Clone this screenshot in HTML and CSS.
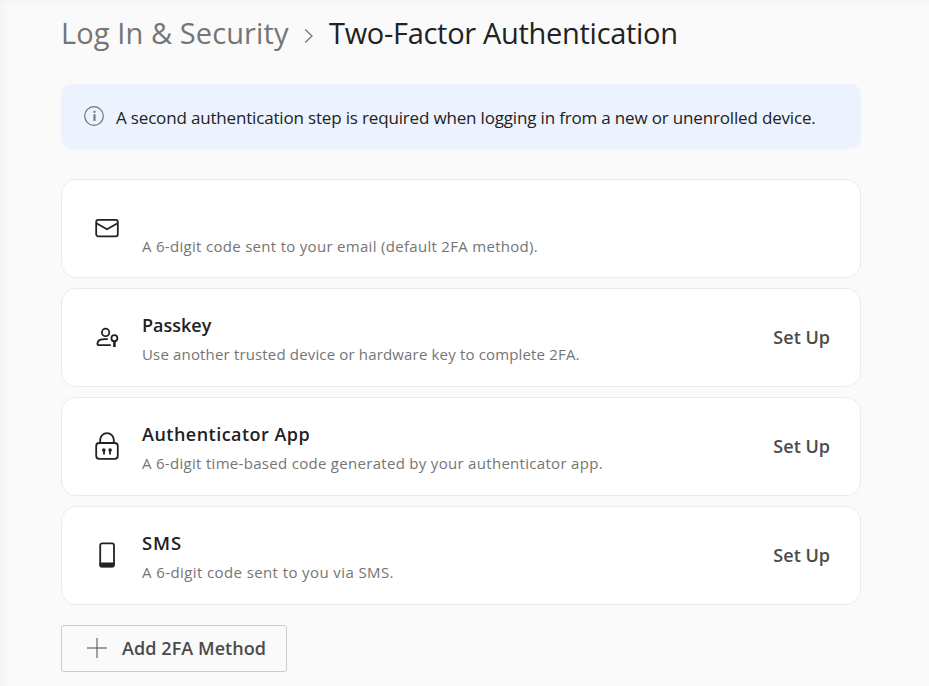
FILE: index.html
```html
<!DOCTYPE html>
<html lang="en">
  <head>
    <meta charset="UTF-8" />
    <meta name="viewport" content="width=device-width, initial-scale=1.0" />
    <title>Two-Factor Authentication</title>
    <link rel="stylesheet" href="styles.css">
  </head>
  <body>
    <main>
      <h1 class="Breadcrumb">
        <a class="Breadcrumb-parent">Log In &amp; Security</a>
        <svg class="Breadcrumb-chevron" width="10" height="16" viewBox="0 0 10 16">
          <path d="M1.200 1.500 8 8l-6.800 6.500" />
        </svg>
        <span class="Breadcrumb-current">Two-Factor Authentication</span>
      </h1>

      <div class="Notice">
        <svg class="Notice-icon" width="21" height="20" viewBox="0 0 21 20">
          <circle cx="11" cy="10" r="9.300" />
          <path d="M11.500 8.300v6.700M11.500 4.800v2" stroke-width="2" />
        </svg>
        <p>A second authentication step is required when logging in from a new or unenrolled device.</p>
      </div>

      <ul class="Methods">
        <li class="Method Method--email">
          <svg class="Method-icon" viewBox="0 0 32 32">
            <rect x="5.200" y="7.900" width="21.600" height="16.400" rx="2" />
            <path d="m5.400 11.200 10.600 6 10.600-6" />
          </svg>
          <div class="Method-text">
            <h2></h2>
            <p>A 6-digit code sent to your email (default 2FA method).</p>
          </div>
        </li>
        <li class="Method Method--passkey">
          <svg class="Method-icon" viewBox="0 0 32 32">
            <circle cx="14.600" cy="11.400" r="3.700" />
            <path d="M16.800 18.200c-5.500-.6-10.200.4-10.400 4.700 0 .9.600 1.300 1.400 1.300h12" />
            <circle cx="23.400" cy="17.200" r="3" />
            <path d="M23.400 20.200v5.800" stroke-width="2.600" />
          </svg>
          <div class="Method-text">
            <h2>Passkey</h2>
            <p>Use another trusted device or hardware key to complete 2FA.</p>
          </div>
          <a class="Method-action">Set Up</a>
        </li>
        <li class="Method Method--app">
          <svg class="Method-icon" viewBox="0 0 32 32">
            <path d="M9.200 13V9.900a6.800 6.800 0 0 1 13.600 0V13" />
            <rect x="5.200" y="13" width="21.600" height="15.800" rx="3" />
            <path d="M13 20v4.400M19 20v4.400" />
            <circle class="is-filled" cx="12.800" cy="20" r="1.800" />
            <circle class="is-filled" cx="19.100" cy="20" r="1.800" />
          </svg>
          <div class="Method-text">
            <h2>Authenticator App</h2>
            <p>A 6-digit time-based code generated by your authenticator app.</p>
          </div>
          <a class="Method-action">Set Up</a>
        </li>
        <li class="Method Method--sms">
          <svg class="Method-icon" viewBox="0 0 32 32">
            <rect x="9.200" y="4.400" width="13.800" height="23" rx="2" />
            <path class="is-filled" d="M8.500 23.500h15V26.500a2 2 0 0 1-2 2h-11a2 2 0 0 1-2-2z" />
          </svg>
          <div class="Method-text">
            <h2>SMS</h2>
            <p>A 6-digit code sent to you via SMS.</p>
          </div>
          <a class="Method-action">Set Up</a>
        </li>
      </ul>

      <button class="AddButton" type="button">
        <svg width="20" height="20" viewBox="0 0 20 20">
          <path d="M10 0v20M0 10h20" />
        </svg>
        <span>Add 2FA Method</span>
      </button>
    </main>
  </body>
</html>
```
FILE: styles.css
```css
:root {
  --color-text: #222;
  --color-muted: #757575;
  --color-action: #4b4b4b;
  --color-border: #ebebeb;
  --color-notice: #ecf3ff;
  --color-page: #fafafa;
}

* {
  box-sizing: border-box;
}

body {
  margin: 0;
  min-height: 686px;
  font-family: "Open Sans", "Noto Sans", sans-serif;
  color: var(--color-text);
  background-color: var(--color-page);
  box-shadow: inset 4px 3px 8px -2px rgba(0, 0, 0, 0.04);
}

main {
  width: 861px;
  padding: 12px 0 0 61px;
}

h1,
h2,
p,
ul {
  margin: 0;
  padding: 0;
}

svg {
  flex: none;
  fill: none;
  stroke: currentColor;
}

.Breadcrumb {
  display: flex;
  align-items: center;
  height: 40px;
  font-size: 29px;
  font-weight: 400;
  white-space: nowrap;
}

.Breadcrumb-parent {
  width: 243px;
  letter-spacing: 0.1px;
  color: var(--color-muted);
}

.Breadcrumb-chevron {
  margin: 8px 15px 0 0;
  stroke-width: 1.3;
  color: var(--color-muted);
}

.Breadcrumb-current {
  letter-spacing: -0.3px;
}

.Notice {
  display: flex;
  align-items: center;
  gap: 12px;
  height: 65px;
  margin: 32px 0 30px;
  padding: 0 22px;
  border-radius: 10px;
  font-size: 17px;
  letter-spacing: -0.17px;
  white-space: nowrap;
  background-color: var(--color-notice);
}

.Notice p {
  padding-top: 1px;
}

.Notice-icon {
  margin-bottom: 1px;
  stroke-width: 1.2;
  color: #6f7278;
}

.Methods {
  display: grid;
  gap: 10px;
  list-style: none;
}

.Method {
  display: flex;
  align-items: center;
  height: 99px;
  padding: 0 30px 0 29px;
  border: 1px solid var(--color-border);
  border-radius: 15px;
  background-color: #fff;
}

.Method-icon {
  width: 32px;
  height: 32px;
  margin: 0 19px 2px 0;
  stroke-width: 1.8;
}

.is-filled {
  fill: currentColor;
  stroke: none;
}

.Method-text {
  flex: 1;
  padding-top: 2px;
}

.Method-text h2 {
  height: 30px;
  font-size: 18px;
  font-weight: 600;
  line-height: 30px;
}

.Method-text p {
  font-size: 15px;
  line-height: 28px;
  letter-spacing: 0.3px;
  color: var(--color-muted);
}

.Method--email p {
  padding-top: 2px;
}

.Method--passkey p {
  letter-spacing: 0.16px;
}

.Method--app h2 {
  letter-spacing: 0.48px;
}

.Method--sms h2 {
  font-size: 18.5px;
  letter-spacing: 0.9px;
}

.Method--sms p {
  letter-spacing: 0.4px;
}

.Method-action {
  padding-bottom: 2px;
  font-size: 18px;
  font-weight: 600;
  color: var(--color-action);
}

.AddButton {
  display: flex;
  align-items: center;
  gap: 15px;
  width: 226px;
  height: 47px;
  margin-top: 20px;
  padding: 0 25px 2px;
  border: 1px solid #ccc;
  border-radius: 3px;
  font: 600 18px "Open Sans", "Noto Sans", sans-serif;
  letter-spacing: 0.07px;
  white-space: nowrap;
  color: var(--color-action);
  background: none;
}
```
